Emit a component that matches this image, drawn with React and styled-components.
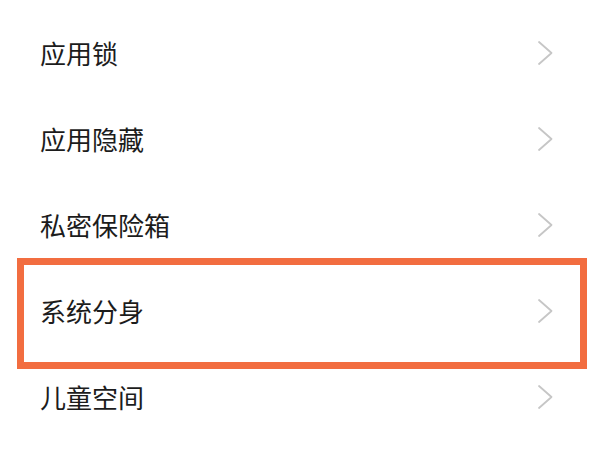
import React from "react";
import styled, { createGlobalStyle } from "styled-components";

const Global = createGlobalStyle`
  html, body { margin: 0; padding: 0; background: #ffffff; }
  body { font-family: "Noto Sans CJK SC", "Noto Sans", sans-serif; }
`;

const List = styled.div`
  display: flex;
  flex-direction: column;
  padding-top: 10px;
  width: 600px;
  height: 450px;
  box-sizing: border-box;
  background: #ffffff;
`;

const Row = styled.div`
  position: relative;
  display: flex;
  align-items: center;
  justify-content: space-between;
  height: 86px;
  padding: 0 47px 0 40px;
  box-sizing: border-box;
  ${(p) =>
    p.$highlight &&
    `
    &::after {
      content: "";
      position: absolute;
      left: 17px;
      right: 13px;
      top: -10px;
      bottom: -15px;
      border: 7px solid #f26d40;
      box-sizing: border-box;
      pointer-events: none;
    }
  `}
`;

const Label = styled.span`
  font-size: 26px;
  line-height: 1;
  color: #1c1c1c;
  letter-spacing: 0;
`;

const Chevron = () => (
  <svg width="16" height="26" viewBox="0 0 16 26" fill="none">
    <polyline
      points="2,2 14.5,13 2,24"
      stroke="#c6c6c6"
      strokeWidth="1.8"
      strokeLinecap="round"
      strokeLinejoin="round"
    />
  </svg>
);

const items = [
  { label: "应用锁" },
  { label: "应用隐藏" },
  { label: "私密保险箱" },
  { label: "系统分身", highlight: true },
  { label: "儿童空间" },
];

export default function App() {
  return (
    <>
      <Global />
      <List>
        {items.map((it) => (
          <Row key={it.label} $highlight={it.highlight}>
            <Label>{it.label}</Label>
            <Chevron />
          </Row>
        ))}
      </List>
    </>
  );
}
